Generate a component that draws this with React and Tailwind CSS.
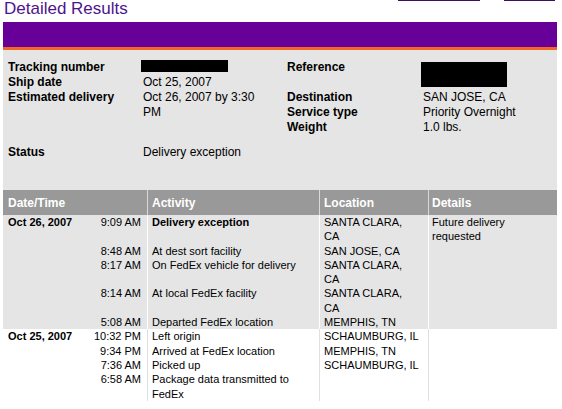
import React from "react";

const font = { fontFamily: '"Liberation Sans", Arial, sans-serif' };

const SC = (
  <>
    SANTA CLARA,
    <br />
    CA
  </>
);

const group1 = [
  { date: "Oct 26, 2007", time: "9:09 AM", act: "Delivery exception", bold: true, loc: SC, det: "Future delivery requested" },
  { time: "8:48 AM", act: "At dest sort facility", loc: "SAN JOSE, CA" },
  { time: "8:17 AM", act: "On FedEx vehicle for delivery", loc: SC },
  { time: "8:14 AM", act: "At local FedEx facility", loc: SC },
  { time: "5:08 AM", act: "Departed FedEx location", loc: "MEMPHIS, TN" },
];
const group2 = [
  { date: "Oct 25, 2007", time: "10:32 PM", act: "Left origin", loc: "SCHAUMBURG, IL" },
  { time: "9:34 PM", act: "Arrived at FedEx location", loc: "MEMPHIS, TN" },
  { time: "7:36 AM", act: "Picked up", loc: "SCHAUMBURG, IL" },
  { time: "6:58 AM", act: "Package data transmitted to FedEx", loc: "" },
];

function Row({ r, line }) {
  return (
    <div className="flex text-[11px] leading-[14.3px] text-black">
      <div className="w-[80px] shrink-0 pl-[5px] font-bold">{r.date || ""}</div>
      <div className="w-[64px] shrink-0 pr-[6px] text-right">{r.time}</div>
      <div className={`w-[172px] shrink-0 border-l ${line} pl-[4px] pr-[2px] ${r.bold ? "font-bold" : ""}`}>{r.act}</div>
      <div className={`w-[109px] shrink-0 border-l ${line} pl-[4px] pr-[2px] whitespace-nowrap`}>{r.loc}</div>
      <div className={`w-[129px] shrink-0 border-l ${line} pl-[3px] pr-[5px]`}>{r.det || ""}</div>
    </div>
  );
}

function Info({ label, children, wide }) {
  return (
    <div className="flex text-[12px] leading-[15px] text-black">
      <div className={`${wide} shrink-0 font-bold`}>{label}</div>
      <div className="min-w-0">{children}</div>
    </div>
  );
}

export default function App() {
  return (
    <div className="w-[562px] h-[409px] bg-white overflow-hidden" style={font}>
      <div className="flex items-start">
        <div className="ml-[4px] mt-[-1px] text-[17px] leading-[19px] text-[#4d148c]">Detailed Results</div>
        <div className="ml-auto flex gap-[24px] mr-[7px]">
          <div className="w-[82px] h-px bg-[#3a1060]" />
          <div className="w-[51px] h-px bg-[#3a1060]" />
        </div>
      </div>
      <div className="mx-[3px] mt-[4px] w-[554px]">
        <div className="h-[25px] bg-[#660099]" />
        <div className="h-[3px] bg-[#f26522]" />
        <div className="h-[140px] bg-[#e5e5e5] flex pt-[10px] pl-[5px]">
          <div className="w-[279px] shrink-0 flex flex-col">
            <Info label="Tracking number" wide="w-[135px]">
              <div className="ml-[-2px] w-[87px] h-[12px] bg-black" />
            </Info>
            <Info label="Ship date" wide="w-[135px]">Oct 25, 2007</Info>
            <Info label="Estimated delivery" wide="w-[135px]">
              <div className="w-[128px]">Oct 26, 2007 by 3:30 PM</div>
            </Info>
            <div className="mt-[25px]">
              <Info label="Status" wide="w-[135px]">Delivery exception</Info>
            </div>
          </div>
          <div className="flex flex-col">
            <div className="h-[30px]">
              <Info label="Reference" wide="w-[136px]">
                <div className="ml-[-2px] mt-[2px] w-[86px] h-[25px] bg-black" />
              </Info>
            </div>
            <Info label="Destination" wide="w-[136px]">SAN JOSE, CA</Info>
            <Info label="Service type" wide="w-[136px]">Priority Overnight</Info>
            <Info label="Weight" wide="w-[136px]">1.0 lbs.</Info>
          </div>
        </div>
        <div className="flex h-[25px] bg-[#999999] text-white text-[12px] leading-[15px] font-bold">
          <div className="w-[144px] shrink-0 pl-[5px] pt-[6px]">Date/Time</div>
          <div className="w-[172px] shrink-0 border-l border-[#d9d9d9] pl-[4px] pt-[6px]">Activity</div>
          <div className="w-[109px] shrink-0 border-l border-[#d9d9d9] pl-[4px] pt-[6px]">Location</div>
          <div className="w-[129px] shrink-0 border-l border-[#d9d9d9] pl-[3px] pt-[6px]">Details</div>
        </div>
        <div className="bg-[#e5e5e5]">
          {group1.map((r, i) => (
            <Row key={i} r={r} line="border-white" />
          ))}
        </div>
        <div className="bg-white">
          {group2.map((r, i) => (
            <Row key={i} r={r} line="border-[#e0e0e0]" />
          ))}
        </div>
      </div>
    </div>
  );
}
